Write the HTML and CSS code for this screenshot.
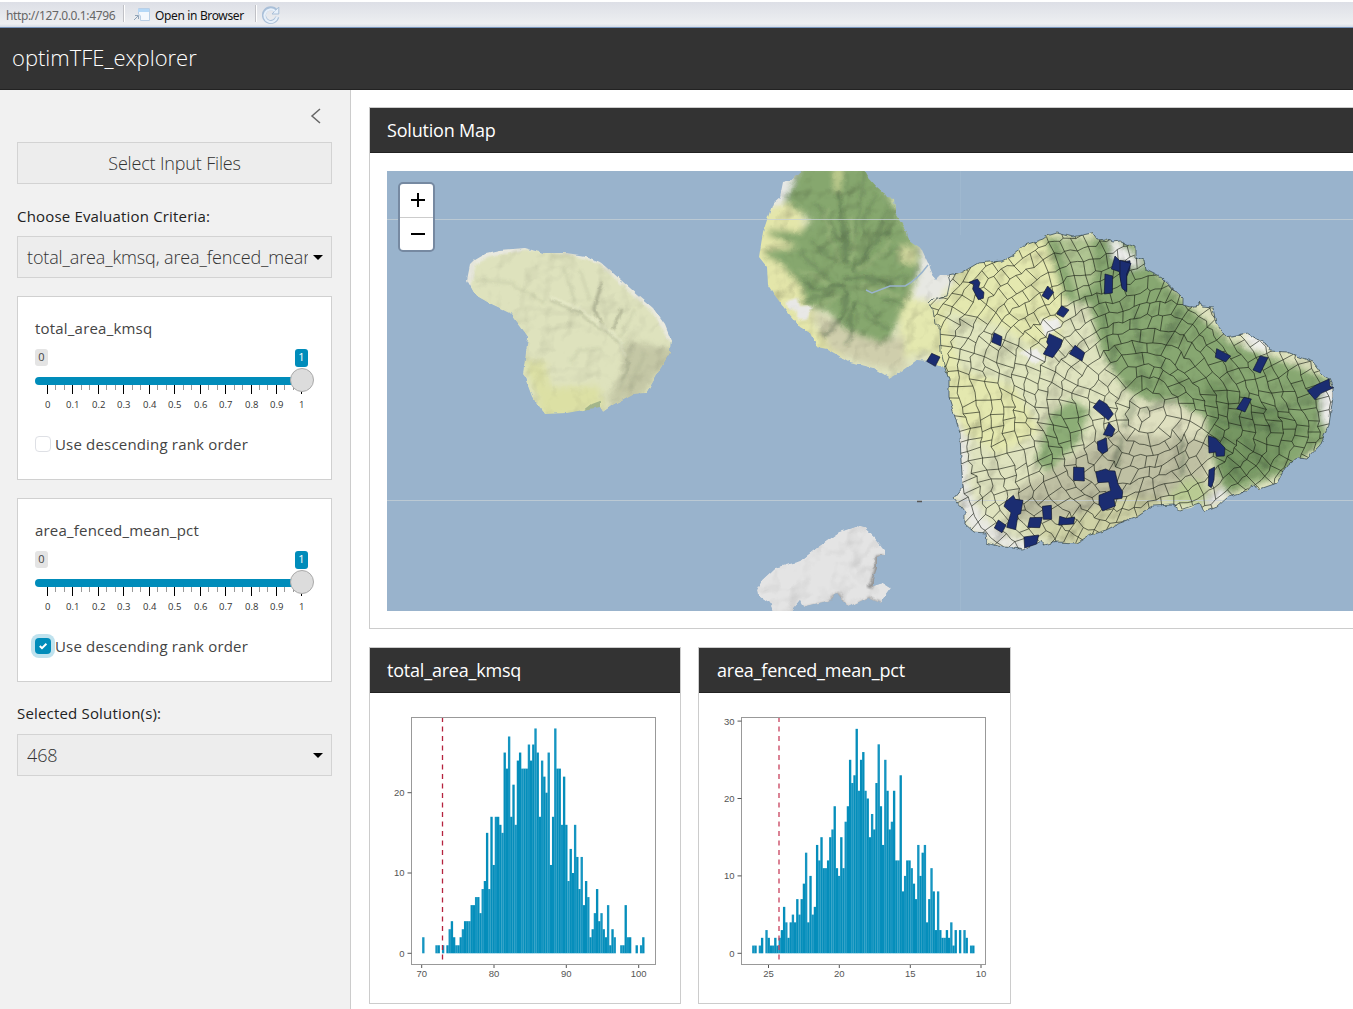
FILE: index.html
```html
<!DOCTYPE html>
<html lang="en">
<head>
<meta charset="utf-8">
<title>optimTFE_explorer</title>
<link rel="stylesheet" href="styles.css">
</head>
<body>
<div class="toolbar">
  <span class="url">http://127.0.0.1:4796</span><i class="sep"></i>
  <svg class="popout" width="17" height="14" viewBox="0 0 17 14"><path d="M5.500.5H16.500V12.500H7.500V8L5.500 6Z" fill="#f4f8fd" stroke="#b9cfe6"/><path d="M5 1H16V4H5Z" fill="#b5d8f7"/><path d="M1 12L5 8M2 7.500H5.500V11" stroke="#91a5b8" fill="none"/></svg>
  <span class="open">Open in Browser</span><i class="sep sep2"></i>
  <svg class="reload" width="18" height="18" viewBox="0 0 18 18"><path d="M14 4.800A6.800 6.800 0 1 0 15.300 11" fill="none" stroke="#a9bfd8" stroke-width="4"/><path d="M10 8H16.800V1Z" fill="#e7f0fa" stroke="#a9bfd8"/><path d="M13 5A6.300 6.300 0 1 0 15 11" fill="none" stroke="#e7f0fa" stroke-width="2.200"/></svg>
</div>
<header class="navbar">optimTFE_explorer</header>
<div class="layout">
  <aside class="sidebar">
    <div class="collapse"><svg width="12" height="16" viewBox="0 0 12 16"><path d="M10 1L2 8L10 15" fill="none" stroke="#666" stroke-width="1.500"/></svg></div>
    <button class="btn">Select Input Files</button>
    <label class="label">Choose Evaluation Criteria:</label>
    <div class="select"><span>total_area_kmsq, area_fenced_mean_pct</span><i class="caret"></i></div>
    <section class="panel">
      <div class="name">total_area_kmsq</div>
      <div class="values"><span class="min">0</span><span class="current">1</span></div>
      <svg class="slider" width="280" height="46" viewBox="0 0 280 46"></svg>
      <div class="check"><i class="box"></i><span>Use descending rank order</span></div>
    </section>
    <section class="panel">
      <div class="name">area_fenced_mean_pct</div>
      <div class="values"><span class="min">0</span><span class="current">1</span></div>
      <svg class="slider" width="280" height="46" viewBox="0 0 280 46"></svg>
      <div class="check"><i class="box on"><svg width="16" height="16" viewBox="0 0 16 16"><path d="M4.800 8L7 10.200L11.400 5.800" fill="none" stroke="#fff" stroke-width="2"/></svg></i><span>Use descending rank order</span></div>
    </section>
    <label class="label label2">Selected Solution(s):</label>
    <div class="select"><span>468</span><i class="caret"></i></div>
  </aside>
  <main class="main">
    <section class="card mapcard">
      <h2>Solution Map</h2>
      <div class="mapwrap">
        <svg class="map" width="984" height="440" viewBox="387 171 984 440">
          <defs>
            <filter id="b3" x="-20%" y="-20%" width="140%" height="140%"><feGaussianBlur stdDeviation="3"/></filter>
            <filter id="b2" x="-20%" y="-20%" width="140%" height="140%"><feTurbulence type="fractalNoise" baseFrequency=".07" numOctaves="2" seed="2"/><feDisplacementMap in="SourceGraphic" scale="12" xChannelSelector="R" yChannelSelector="G"/><feGaussianBlur stdDeviation="1.500"/></filter>
            <filter id="b1" x="-20%" y="-20%" width="140%" height="140%"><feGaussianBlur stdDeviation="1.300"/></filter>
            <filter id="coast" x="-5%" y="-5%" width="110%" height="110%"><feTurbulence type="fractalNoise" baseFrequency=".13" numOctaves="2" seed="4"/><feDisplacementMap in="SourceGraphic" scale="4" xChannelSelector="R" yChannelSelector="G"/></filter>
            <filter id="relief" x="0" y="0" width="100%" height="100%"><feTurbulence type="fractalNoise" baseFrequency=".028" numOctaves="3" seed="9"/><feDiffuseLighting surfaceScale="16" lighting-color="#fff" diffuseConstant="1.180"><feDistantLight azimuth="225" elevation="58"/></feDiffuseLighting></filter>
            <path id="maui" d="M783 182L791 180L805 168L863 168L868 177L877 187L883 192L887 198L894 199L896 215L907 232L909 241L922 250L928 263L933 275L936 279L940 275L948 275L963 272L978 263L1002 261L1013 255L1025 245L1043 239L1047 236L1057 233L1073 237L1092 233L1097 240L1106 239L1113 242L1120 241L1135 247L1135 257L1144 260L1146 270L1162 278L1172 288L1183 298L1183 305L1190 307L1199 305L1199 301L1202 307L1213 308L1216 323L1226 337L1247 333L1267 345L1270 351L1287 352L1313 362L1323 375L1329 379L1333 388L1333 397L1331 410L1329 425L1320 445L1307 459L1297 458L1285 468L1277 483L1260 489L1253 485L1243 493L1228 497L1217 507L1204 512L1200 503L1191 508L1180 510L1173 505L1153 506L1137 517L1120 523L1106 530L1090 535L1077 543L1057 542L1043 545L1040 540L1023 550L1013 548L997 546L987 543L986 533L973 532L965 525L965 512L954 498L963 487L961 460L960 433L955 417L949 398L949 380L945 368L930 361L917 360L903 370L890 378L873 368L850 362L827 349L817 347L810 333L800 327L785 309L773 293L768 285L767 267L759 257L763 232L767 220L773 203L780 197Z"/>
            <path id="lanai" d="M470 265L475 260L487 253L500 250L525 248L543 253L567 253L585 256L600 262L613 273L630 288L653 308L665 325L671 340L670 353L658 373L647 393L633 394L613 405L603 412L600 407L567 413L545 414L532 397L523 373L528 337L520 326L510 313L487 302L475 295L467 280Z"/>
            <path id="kaho" d="M757 590L762 580L775 568L800 561L818 547L840 532L857 526L865 528L875 538L885 550L885 555L877 557L877 568L873 580L873 586L883 583L891 588L880 603L868 598L848 607L837 593L832 600L803 607L800 600L790 612L773 612L770 603L758 595Z"/>
            <clipPath id="cm"><use href="#maui"/></clipPath><clipPath id="cl"><use href="#lanai"/></clipPath><clipPath id="ck"><use href="#kaho"/></clipPath>
            <path id="east" d="M948 275L963 272L978 263L1002 261L1013 255L1025 245L1043 239L1047 236L1057 233L1073 237L1092 233L1097 240L1106 239L1113 242L1120 241L1135 247L1135 257L1144 260L1146 270L1162 278L1183 298L1183 305L1190 307L1199 305L1199 301L1202 307L1213 308L1216 323L1226 337L1247 333L1267 345L1270 351L1287 352L1313 362L1323 375L1329 379L1333 388L1333 397L1331 410L1329 425L1320 445L1307 459L1297 458L1285 468L1277 483L1260 489L1253 485L1243 493L1228 497L1217 507L1204 512L1200 503L1180 510L1173 505L1153 506L1137 517L1120 523L1106 530L1090 535L1077 543L1057 542L1043 545L1040 540L1023 550L1013 548L997 546L987 543L986 533L973 532L965 525L965 512L954 498L963 487L961 460L960 433L955 417L949 398L949 380L945 368L941 352L940 327L935 323L933 310L928 303L932 299L947 296L950 282Z"/>
            <clipPath id="ce"><use href="#east"/></clipPath>
          </defs>
          <rect x="387" y="171" width="984" height="440" fill="#99b3cc"/>
          <g filter="url(#coast)">
            <g clip-path="url(#cm)">
              <rect x="750" y="160" width="600" height="400" fill="#dfe3bf"/>
              <g filter="url(#b3)">
                <path d="M745 190L800 205L815 330L850 350L830 365L745 290Z" fill="#e4e6aa"/>
                <path d="M900 290L960 270L1050 228L1068 290L1060 340L1035 345L1010 380L1040 430L1000 455L960 430L940 390L930 350L900 360Z" fill="#e4e8af"/>
                <path d="M945 310L1000 325L1050 360L1040 395L960 370Z" fill="#e0e5be"/>
                <path d="M790 165H870L900 215L921 255L918 275L888 342H862L840 325L830 312L805 305L800 285L778 262L765 256L765 250L798 247L768 235L768 230L800 232L812 220L784 202Z" fill="#86a76e"/>
                <path d="M812 310L845 330L880 343L905 335V370L870 365L830 350Z" fill="#cfceac"/>
                <path d="M1045 238L1130 240L1150 265L1190 308L1230 342L1330 380L1325 440L1280 475L1225 495L1210 445L1205 415L1145 400L1125 388L1100 350L1090 305L1065 300Z" fill="#87a771"/>
                <path d="M1058 240L1092 238L1095 280L1078 300Z" fill="#b0c592"/>
                <path d="M1072 400L1088 410L1080 440L1048 472L1036 462L1050 415Z" fill="#8cad76"/>
                <path d="M1015 490L1060 464L1110 430L1210 440L1205 490L1130 502L1080 522L1020 520Z" fill="#b8b89c" opacity=".8"/>
                <path d="M1020 530L1075 515L1130 495L1170 500L1150 512L1080 548Z" fill="#cfd2a6"/>
                <path d="M1205 380L1255 400L1310 425L1275 465L1225 485L1210 445Z" fill="#759662"/>
                <path d="M1130 405L1175 400L1205 425L1195 438L1115 435Z" fill="#dfe0c0"/>
                <path d="M1165 502L1185 478L1204 482L1212 505Z" fill="#b9cb93"/>
                <path d="M922 235L955 280L938 302L912 298L920 270Z" fill="#e7e8e3"/>
                <path d="M775 175L800 168L784 202L765 210Z" fill="#e7e8e5"/>
                <path d="M945 400L955 490L970 530L1020 555L1045 545L1010 538L985 520L968 490V440Z" fill="#e9e9e4"/>
                <path d="M1110 235L1145 265L1132 268L1112 258Z" fill="#f0f0ee"/>
                <path d="M1320 385L1338 390L1332 430L1322 422Z" fill="#eeeeec"/>
                <path d="M1243 328L1270 342L1266 352L1248 346Z" fill="#f2f2f0"/>
                <path d="M1210 507L1230 495L1220 488L1205 500Z" fill="#eee"/>
                <path d="M834 168H842L839 192H835Z" fill="#ccd596"/>
                <path d="M900 245L915 248L918 265L900 262Z" fill="#cfd59c"/>
              </g>
              <path d="M786 301L798 298L800 306L813 305L807 320L797 320L797 311L786 307Z" fill="#e8e8e6" filter="url(#b1)"/>
              <path d="M1040 320L1056 318L1062 326L1045 337ZM1020 352L1036 348L1047 361L1032 363Z" fill="#eeeeeb" filter="url(#b1)"/>
              <g fill="none" stroke="#3c5236" filter="url(#b2)">
                <g stroke-width="5" opacity=".3"><path d="M834 190Q848 220 844 265"/><path d="M850 270Q868 258 877 240L894 232"/><path d="M845 285L815 291L803 283M845 279L874 277L893 286"/><path d="M845 290L842 320L826 338M854 305L847 345"/></g>
                <g stroke-width="3.500" opacity=".2"><path d="M865 170L860 215L846 265M875 195L863 235M888 210L870 240M810 240L840 267M798 253L832 280M800 300L835 295M870 285L908 276M856 302L883 318M817 203L842 240M880 300L905 305M862 315L890 330M875 255L905 250M810 262L825 272"/></g>
                <path d="M1132 400L1125 430M1180 310L1165 345L1157 355L1165 370M1140 410L1175 402M1120 440L1115 465M1182 440V475M1215 420L1280 428M1245 440L1270 470M1140 370L1150 390M1215 430L1240 480M1100 300L1115 370M1135 310L1140 360M1230 420L1310 400" stroke-width="6" opacity=".25"/>
              </g>
              <g fill="none" stroke="#a6bd83" stroke-width="5" opacity=".4" filter="url(#b2)"><path d="M852 215L852 262M858 270L880 255L890 240M862 287L900 296M841 297L815 307M825 210L838 265M800 270L830 282"/></g>
              <rect x="750" y="165" width="600" height="400" filter="url(#relief)" opacity=".28" style="mix-blend-mode:multiply"/>
            </g>
            <g clip-path="url(#cl)">
              <use href="#lanai" fill="#dee2bd"/><path d="M466 290L473 262L488 254L525 246L570 251L600 260L625 283L655 310L672 340" fill="none" stroke="#e9e9df" stroke-width="7" filter="url(#b1)"/>
              <path d="M523 360L545 362L550 388L598 386L604 408L545 420Z" fill="#dce0a4" filter="url(#b3)"/>
              <path d="M583 411L592 404L600 401L600 409Z" fill="#a3b58b"/>
              <path d="M625 340L675 350L640 398L605 402L622 375Z" fill="#b4b696" opacity=".6" filter="url(#b3)"/>
              <g fill="none" stroke="#81866d" filter="url(#b1)"><path d="M602 283L594 308L603 328M622 309L613 330" stroke-width="3" opacity=".45"/><path d="M603 328L622 345L629 365L622 381M550 300L580 313L601 330" stroke-width="2.500" opacity=".25"/><path d="M570 362L580 350L602 349M633 345L620 390M645 352L628 391M635 310L618 340M475 280L510 283L545 303M580 270L590 300M564 268L575 302" stroke-width="4" opacity=".11"/></g>
              <path d="M550 297L580 309L601 325L620 340L626 358" fill="none" stroke="#edf0d0" stroke-width="2" opacity=".7" filter="url(#b1)"/>
              <rect x="460" y="240" width="220" height="180" filter="url(#relief)" opacity=".15" style="mix-blend-mode:multiply"/>
            </g>
            <g clip-path="url(#ck)"><use href="#kaho" fill="#e4e4e4"/><path d="M884 557L877 558V570L870 588" stroke="#999" stroke-width="5" fill="none" filter="url(#b1)"/><path d="M847 609L838 594L830 602L803 609M882 605L869 598L850 609" stroke="#aaa" stroke-width="3" fill="none" filter="url(#b1)"/><rect x="750" y="520" width="150" height="95" filter="url(#relief)" opacity=".14" style="mix-blend-mode:multiply"/></g>
          </g>
          <path d="M866 290L872 293L890 286H905Q917 280 928 265" fill="none" stroke="#99b3cc" stroke-width="1.400"/>
          <path d="M387 219.500H1371M387 500.500H1371" stroke="#c7d0d6" stroke-width="1" opacity=".75"/>
          <path d="M960.500 171V235M960.500 540V611" stroke="#b0c4d8" opacity=".3"/>
          <path d="M917 501.500h5" stroke="#555" stroke-width="1.500"/>
          <g clip-path="url(#ce)"><path id="mesh" fill="none" stroke="#151b12" stroke-opacity=".68" stroke-width=".9" stroke-linejoin="round"/></g>
          <use href="#east" fill="none" stroke="#31434b" stroke-opacity=".7" stroke-width="1" filter="url(#coast)"/>
          <g fill="#1b2d71" stroke="#11162e" stroke-width="2">
            <g transform="translate(910 220) scale(.33333)"><path d="M177 187L202 177L210 188L206 202L222 217L220 235L205 239L188 207L191 193Z"/><path d="M413 198L431 217L415 239L396 227Z"/><path d="M455 257L477 270L460 292L440 282Z"/><path d="M252 338L276 350L272 378L245 366Z"/><path d="M418 341L457 360L452 380L428 413L400 402L415 375L410 366Z"/><path d="M495 376L524 398L516 423L478 401Z"/><path d="M65 400L90 411L76 439L50 424Z"/><path d="M585 162L608 168L607 219L583 222Z"/><path d="M615 108L633 126L660 122V146L650 170V212L636 200L628 155L604 147Z"/></g>
            <g transform="translate(1120 220) scale(.33333)"><path d="M0 121L33 130L20 162V216L6 205L0 170Z"/><path d="M290 386L332 408L317 426L286 412Z"/><path d="M420 408L444 413L421 459L399 450Z"/><path d="M590 494L627 477L630 499L641 503L603 520L585 539L562 512Z"/></g>
            <g transform="translate(910 390) scale(.33333)"><path d="M568 29L590 42L610 72L595 91L549 52Z"/><path d="M597 98L615 118L606 140L580 134Z"/><path d="M562 155L589 144L593 183L578 191L564 180Z"/><path d="M491 231L522 233L523 273L490 271Z"/><path d="M557 246L587 237L598 242L615 243L624 282L638 305L636 325L612 328L616 348L578 363L567 342V316L602 302L596 276L564 278Z"/><path d="M310 316L316 328L339 331L332 371L324 374L317 419L290 412L303 368L282 349L287 335Z"/><path d="M265 390L288 406L276 428L253 414Z"/><path d="M397 349L424 346L425 388L400 388Z"/><path d="M360 383L397 382L389 413L353 412Z"/><path d="M449 379L469 385L494 381L491 402L446 405Z"/><path d="M342 441L386 435L380 462L344 474Z"/></g>
            <g transform="translate(1120 370) scale(.33333)"><path d="M265 197L287 205L315 234L313 258L289 259L287 246L267 249Z"/><path d="M267 300L284 291L282 330L274 353L265 347Z"/><path d="M372 82L394 87L375 126L350 116Z"/></g>
          </g>
        </svg>
        <div class="zoom"><b><svg width="14" height="14" viewBox="0 0 14 14"><path d="M0 7H14M7 0V14" stroke="#000" stroke-width="2"/></svg></b><b><svg width="14" height="14" viewBox="0 0 14 14"><path d="M0 7H14" stroke="#000" stroke-width="2"/></svg></b></div>
      </div>
    </section>
    <div class="cards">
      <section class="card hist"><h2>total_area_kmsq</h2><svg id="h1" width="276" height="276" viewBox="387 711 276 276"></svg></section>
      <section class="card hist hist2"><h2>area_fenced_mean_pct</h2><svg id="h2" width="276" height="276" viewBox="717 711 276 276"></svg></section>
    </div>
  </main>
</div>
<script src="app.js"></script>
</body>
</html>
```
FILE: styles.css
```css
*{box-sizing:border-box}
body{margin:0;height:1009px;overflow:hidden;background:#fff;font-family:"Open Sans",sans-serif;color:#444}
.toolbar{height:28px;border-top:2px solid #fff;border-bottom:1px solid #7693bb;background:linear-gradient(#dddfe6,#e8eaee 60%,#eeeff2 88%,#d4dbe6);display:flex;align-items:center;padding:1px 0 0 6px;font:12px "Noto Sans",sans-serif;color:#666}
.url{width:112px;letter-spacing:-.38px}
.sep{width:2px;height:17px;margin:-3px 8px 0 5px;border-left:1px solid #c0c1c6;border-right:1px solid #fff}
.open{margin-left:5px;color:#111;width:90px;letter-spacing:-.35px}
.sep2{margin:-3px 5px 0 10px}
.navbar{height:62px;background:#333;border-bottom:1px solid #222;color:#fff;font-size:22px;font-weight:300;line-height:59px;padding-left:12px}
.layout{display:flex;height:919px}
.sidebar{flex:none;width:351px;background:#f1f1f1;border-right:1px solid #ccc;padding:18px 18px 0 17px}
.collapse{height:34px;padding-left:293px;line-height:0}
.btn{display:block;width:315px;height:42px;border:1px solid #d3d3d3;background:#ededed;font:300 18px "Open Sans",sans-serif;letter-spacing:-.17px;color:#333;padding:0}
.label{display:block;font-size:15px;line-height:22px;margin:21px 0 9px;color:#222;letter-spacing:.18px}
.label2{margin:20px 0 10px}
.select{width:315px;height:42px;border:1px solid #d3d3d3;background:#ededed;display:flex;align-items:center;justify-content:space-between;padding:0 8px 0 9px;font-size:18px;font-weight:300;letter-spacing:-.13px;color:#333}
.select span{overflow:hidden;white-space:nowrap;width:281px}
.caret{border:5px solid transparent;border-top-color:#000;border-bottom:0}
.panel{width:315px;height:184px;margin-top:18px;border:1px solid #d0d0d0;background:#fff;padding:20px 17px 0}
.name{font-size:15px;line-height:22px;letter-spacing:.2px}
.values{display:flex;justify-content:space-between;height:18px;margin-top:10px;padding-right:6px;font-size:11px;line-height:16px;text-align:center}
.min{width:13px;height:17px;background:#e4e4e4;border-radius:3px}
.current{width:13px;height:18px;background:#008cba;color:#fff;border-radius:3px}
.slider{display:block;height:46px;overflow:visible}
.slider text{font-size:9.500px;fill:#333;text-anchor:middle}
.check{display:flex;align-items:center;margin-top:20px;font-size:15px;line-height:22px;letter-spacing:.18px}
.box{width:16px;height:16px;border:1px solid #dee0e5;border-radius:4px;margin-right:4px;flex:none}
.box.on{border:0;background:#008cba;box-shadow:0 0 0 4px #bfe2ee}
.box svg{display:block}
.main{flex:1;min-width:0;overflow:hidden;padding:17px 0 0 18px}
.card{border:1px solid #ccc;background:#fff}
.card h2{margin:0;height:45px;background:#333;border-bottom:1px solid #222;color:#fff;font-size:18px;font-weight:400;line-height:44px;padding-left:17px;letter-spacing:-.2px}
.hist2 h2{padding-left:18px}
.mapcard{width:1020px;height:522px}
.mapwrap{position:relative;margin:18px 17px}
.map{display:block}
.zoom{position:absolute;left:11px;top:11px;width:37px;height:70px;border:2px solid #7689a1;border-radius:5px;background:#fff;display:flex;flex-direction:column}
.zoom b{flex:1;display:flex;align-items:center;justify-content:center;padding-left:2px}
.zoom b:first-child{border-bottom:1px solid #ccc}
.cards{display:flex;margin-top:18px;gap:17px}
.hist{width:312px;height:357px}
.hist2{width:313px}
.hist svg{display:block;margin:18px 0 0 17px}
.hist2 svg{margin-left:18px}
.hist text{font:9.500px "Liberation Sans",sans-serif;fill:#555}
```
FILE: app.js
```javascript
// Rank sliders
document.querySelectorAll('.slider').forEach(function (s) {
  var o = '<rect x="0" y="10" width="267" height="8" rx="4" fill="#008cba"/>';
  for (var i = 0; i <= 30; i++) {
    var x = Math.round(12 + i * 25.44 / 3) + 0.5;
    if (i % 3 === 0) {
      o += '<path d="M' + x + ' 18V27" stroke="#000"/><text x="' + (x + 0.2) + '" y="41">' + (i ? (i === 30 ? 1 : (i / 30).toFixed(1)) : 0) + '</text>';
    } else o += '<path d="M' + x + ' 18V23" stroke="#999"/>';
  }
  s.innerHTML = o + '<circle cx="267" cy="13" r="11.500" fill="#dcdcdc" stroke="#aaa"/>';
});

// Histograms
function hist(id, x0, left, bottom, unit, counts, xt, yt, mark, color) {
  var o = '';
  counts.forEach(function (c, i) {
    if (c) o += '<rect x="' + (x0 + i * 2.2 - 1.15) + '" y="' + (bottom - c * unit) + '" width="2.350" height="' + c * unit + '" fill="' + (i % 3 ? '#058eBb' : '#1595c1') + '"/>';
  });
  o += '<path d="M' + mark + ' 717V964" stroke="' + color + '" stroke-width="1.300" stroke-dasharray="5 4.500"/>';
  o += '<rect x="' + left + '" y="717.500" width="244" height="247" fill="none" stroke="#999"/>';
  xt.forEach(function (t) { o += '<path d="M' + t[0] + ' 965v3" stroke="#555"/><text text-anchor="middle" x="' + t[0] + '" y="977">' + t[1] + '</text>'; });
  yt.forEach(function (n) { var y = bottom - n * unit; o += '<path d="M' + (left - 4) + ' ' + y + 'h4" stroke="#555"/><text text-anchor="end" x="' + (left - 7) + '" y="' + (y + 3.4) + '">' + n + '</text>'; });
  document.getElementById(id).innerHTML = o;
}
hist('h1', 423.3, 411.5, 953.3, 8.03, [2,0,0,0,0,0,1,1,0,1,0,1,3,4,2,1,1,2,3,4,4,4,6,6,7,7,5,8,9,15,8,17,11,17,17,16,15,25,23,27,17,21,16,24,25,23,23,23,26,24,26,28,25,17,24,22,20,25,11,17,28,23,23,16,22,16,9,13,10,16,12,8,12,6,9,7,2,3,5,8,4,5,3,2,6,1,3,2,0,0,1,1,6,2,2,0,0,1,0,1,2],
  [[421.7,70],[494,80],[566.3,90],[638.7,100]], [0,10,20], 442.5, '#b5223e');
hist('h2', 753.3, 741.5, 953.3, 7.74, [1,1,0,1,2,0,3,2,1,1,2,1,2,3,6,4,2,4,5,4,7,5,7,9,13,4,10,5,6,14,12,15,11,11,12,15,16,19,11,10,15,11,17,19,25,22,23,29,21,25,26,21,20,15,18,16,22,27,19,14,25,21,16,17,21,12,12,23,8,10,12,12,11,9,7,14,10,13,14,4,7,11,8,3,8,3,2,2,3,2,4,1,3,0,3,0,3,2,0,1,1],
  [[768.5,25],[839.3,20],[910.3,15],[981,10]], [0,10,20,30], 779, '#c8405c');

// Planning units: cells fanning out from the summit
var seed = 11;
function rnd() { seed = (seed * 16807) % 2147483647; return seed / 2147483647; }
var step = 12.6;
function pt(r, a) {
  var x = 1142 + r * Math.cos(a), y = 412 + r * Math.sin(a);
  return (x + 7 * Math.sin(y / 31) + 2 * Math.sin(x / 17 + y / 13)).toFixed(1) + ' ' + (y + 7 * Math.sin(x / 33) + 2 * Math.cos(x / 14 - y / 17)).toFixed(1);
}
// Each ring is a jittered polyline; spokes end on its vertices
var rings = [];
for (var k = 0; k < 21; k++) {
  var n = Math.max(6, Math.round(2 * Math.PI * (6 + k * step) / 6)), ring = [];
  for (var j = 0; j < n; j++) ring.push([7 + k * step + (rnd() - 0.5) * 4.2, (j + (rnd() - 0.5) * 0.5) / n * 2 * Math.PI]);
  rings.push(ring);
}
var d = '';
rings.forEach(function (ring, k) {
  d += 'M' + ring.map(function (p) { return pt(p[0], p[1]); }).join('L') + 'Z';
  var next = rings[k + 1];
  if (!next) return;
  for (var j = k % 2; j < ring.length; j += rnd() > 0.86 ? 3 : 2) {
    var m = Math.round(ring[j][1] / (2 * Math.PI) * next.length);
    var q = next[(m + next.length) % next.length];
    d += 'M' + pt(ring[j][0], ring[j][1]) + 'L' + pt(q[0], q[1]);
  }
});
document.getElementById('mesh').setAttribute('d', d);
```
